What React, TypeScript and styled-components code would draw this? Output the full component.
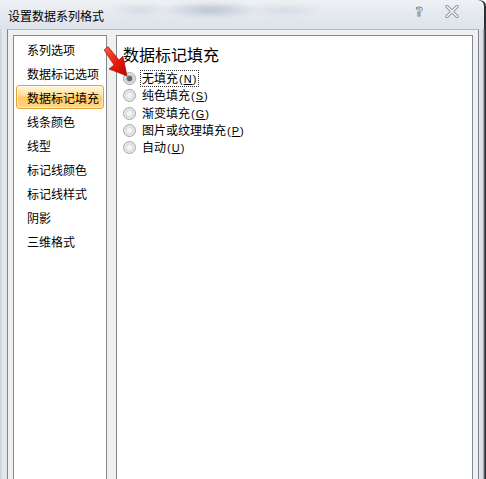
import React from 'react';
import styled, { createGlobalStyle } from 'styled-components';

const categories = ['系列选项', '数据标记选项', '数据标记填充', '线条颜色', '线型', '标记线颜色', '标记线样式', '阴影', '三维格式'];

const fillOptions = [
    { label: '无填充', key: 'N' },
    { label: '纯色填充', key: 'S' },
    { label: '渐变填充', key: 'G' },
    { label: '图片或纹理填充', key: 'P' },
    { label: '自动', key: 'U' },
];

const GlobalStyle = createGlobalStyle`
    body {
        margin: 0;
        font-family: "Noto Sans CJK SC", "Noto Sans", sans-serif;
        color: #000;
    }
`;

export default function App() {
    return (
        <>
            <GlobalStyle />
            <Window>
                <TitleBar>
                    <Title>设置数据系列格式</Title>
                    <Blur />
                    <Caption>
                        <Help>?</Help>
                        <svg width="14" height="13" viewBox="0 0 14 13">
                            <path d="M2 1.5 L12 11.5 M12 1.5 L2 11.5" stroke="#8a9098" strokeWidth="3.2" strokeLinecap="round" />
                            <path d="M2 1.5 L12 11.5 M12 1.5 L2 11.5" stroke="#f4f6f8" strokeWidth="1.6" strokeLinecap="round" />
                        </svg>
                    </Caption>
                </TitleBar>
                <Client>
                    <CategoryList>
                        {categories.map((c, i) => (
                            <Category key={c} selected={i === 2}>
                                {c}
                            </Category>
                        ))}
                    </CategoryList>
                    <Pane>
                        <Heading>数据标记填充</Heading>
                        {fillOptions.map((o, i) => (
                            <Option key={o.key}>
                                <Radio focused={i === 0} />
                                <Label focused={i === 0}>
                                    {o.label}
                                    <Key>
                                        (<u>{o.key}</u>)
                                    </Key>
                                </Label>
                            </Option>
                        ))}
                    </Pane>
                </Client>
                <Arrow width="30" height="34" viewBox="0 0 30 34">
                    <defs>
                        <linearGradient id="arrowFill" x1="0" y1="0" x2="1" y2="1">
                            <stop offset="0" stopColor="#ff5a48" />
                            <stop offset="0.55" stopColor="#e8180d" />
                            <stop offset="1" stopColor="#b00a02" />
                        </linearGradient>
                    </defs>
                    <polygon
                        points="1,4 5,0.5 16,14 20,10 24,30 6,23 11,19"
                        fill="url(#arrowFill)"
                        stroke="#a00c05"
                        strokeWidth="0.6"
                        strokeLinejoin="round"
                    />
                </Arrow>
            </Window>
        </>
    );
}

const Window = styled.div`
    position: relative;
    width: 486px;
    height: 479px;
    overflow: hidden;
    display: flex;
    flex-direction: column;
    box-sizing: border-box;
    padding: 0 7px;
    background: linear-gradient(90deg, #c9cfd6 0px, #e6eaef 3px, #e2e6eb 6px, #e2e6eb 480px, #d4d9de 483px, #2c2f33 485px);
    border-top-right-radius: 6px;
`;

const TitleBar = styled.div`
    position: relative;
    height: 29px;
    margin: 0 -7px;
    padding: 0 8px;
    display: flex;
    align-items: center;
    background: linear-gradient(180deg, #eef1f4 0%, #e3e8ee 60%, #dde3ea 100%);
    border-top-right-radius: 6px;
    box-shadow: inset -2px 0 0 #2c2f33;
`;

const Title = styled.span`
    position: relative;
    z-index: 1;
    font-size: 12px;
    padding-top: 2px;
`;

const Blur = styled.div`
    position: absolute;
    left: 110px;
    top: 0;
    width: 230px;
    height: 22px;
    background: radial-gradient(ellipse 50px 8px at 100px 10px, rgba(120, 140, 170, 0.45), transparent),
        radial-gradient(ellipse 30px 6px at 30px 10px, rgba(170, 185, 205, 0.4), transparent),
        radial-gradient(ellipse 40px 6px at 175px 10px, rgba(170, 185, 205, 0.35), transparent);
    filter: blur(2px);
`;

const Caption = styled.div`
    margin-left: auto;
    margin-right: 19px;
    display: flex;
    align-items: center;
    gap: 22px;
    margin-top: -6px;
`;

const Help = styled.span`
    font-family: "DejaVu Sans", sans-serif;
    font-weight: bold;
    font-size: 13px;
    color: #f4f6f8;
    -webkit-text-stroke: 0.8px #7d848c;
`;

const Client = styled.div`
    flex: 1;
    display: flex;
    gap: 9px;
    padding: 5px 5px 0;
    background: #f0f0f0;
    border-top: 1px solid #b4bac1;
    border-left: 1px solid #7f858c;
    border-right: 1px solid #7f858c;
`;

const CategoryList = styled.div`
    width: 94px;
    box-sizing: border-box;
    padding: 1px 2px;
    background: #fff;
    border: 1px solid #828790;
    border-bottom: none;
`;

const Category = styled.div<{ selected: boolean }>`
    height: 24px;
    box-sizing: border-box;
    display: flex;
    align-items: center;
    padding-left: 10px;
    font-size: 12px;
    white-space: nowrap;
    border: 1px solid ${({ selected }) => (selected ? '#e3a33b' : 'transparent')};
    border-radius: 3px;
    background: ${({ selected }) =>
        selected ? 'linear-gradient(180deg, #fff6d8 0%, #ffe29a 40%, #ffc862 55%, #ffd98c 100%)' : 'transparent'};
    box-shadow: ${({ selected }) => (selected ? 'inset 0 0 0 1px rgba(255, 255, 255, 0.5)' : 'none')};
`;

const Pane = styled.div`
    flex: 1;
    box-sizing: border-box;
    padding: 8px 0 0 6px;
    background: #fff;
    border: 1px solid #828790;
    border-bottom: none;
`;

const Heading = styled.div`
    font-size: 16px;
    line-height: 20px;
    margin-bottom: 6px;
`;

const Option = styled.div`
    height: 17.3px;
    display: flex;
    align-items: center;
    gap: 5px;
    font-size: 12px;
`;

const Radio = styled.span<{ focused: boolean }>`
    width: 11px;
    height: 11px;
    flex: none;
    border-radius: 50%;
    border: 1px solid #a0a4a8;
    background: ${({ focused }) =>
        focused
            ? 'radial-gradient(circle, #6a6a6a 0 2.5px, #bdbdbd 3px, #e8e8e8 5px)'
            : 'radial-gradient(circle, #f4f4f4 0 2.5px, #d8d8d8 3.5px, #ececec 5px)'};
`;

const Label = styled.span<{ focused: boolean }>`
    padding: 0 1px;
    line-height: 14px;
    outline: ${({ focused }) => (focused ? '1px dotted #333' : 'none')};
    outline-offset: 0;
`;

const Key = styled.span`
    font-family: "Liberation Sans", sans-serif;
    font-size: 11px;
    margin-left: 1px;
    letter-spacing: 1px;
`;

const Arrow = styled.svg`
    position: absolute;
    left: 103px;
    top: 46px;
`;
